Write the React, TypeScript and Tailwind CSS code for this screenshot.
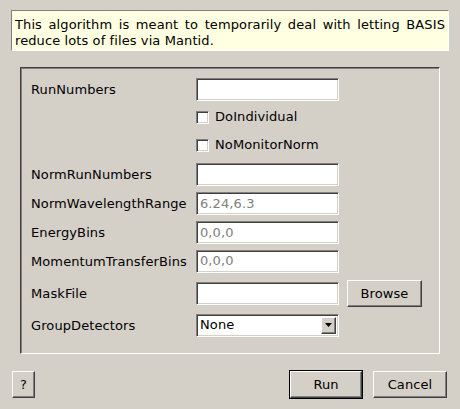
import React from 'react';

const sunken =
  'border border-t-[#808080] border-l-[#808080] border-r-white border-b-white shadow-[inset_1px_1px_0_#404040,inset_-1px_-1px_0_#d4d0c8]';
const raised =
  'border border-t-white border-l-white border-r-[#404040] border-b-[#404040] shadow-[inset_-1px_-1px_0_#808080] bg-[#d4d0c8]';

const TextField: React.FC<{ value?: string }> = ({ value }) => (
  <div className={`w-[143px] h-[23px] bg-white ${sunken} flex items-center pl-[3px] text-[#808080]`}>
    {value}
  </div>
);

const CheckBox: React.FC<{ label: string }> = ({ label }) => (
  <div className="flex items-center gap-[6px]">
    <div className={`w-[13px] h-[13px] bg-white ${sunken}`}></div>
    <span>{label}</span>
  </div>
);

export default function App() {
  return (
    <div
      className="w-[460px] h-[409px] bg-[#d4d0c8] text-[13px] leading-[16px] tracking-[0.1px] text-black flex flex-col"
      style={{ fontFamily: '"DejaVu Sans", Verdana, sans-serif' }}
    >
      {/* description */}
      <div className="pt-[10px] px-[11px]">
        <div className="h-[41px] bg-[#ffffe1] border border-t-[#808080] border-l-[#808080] border-r-white border-b-white pt-[6px] px-[3px] text-justify">
          This algorithm is meant to temporarily deal with letting BASIS reduce lots of files via Mantid.
        </div>
      </div>

      {/* properties group */}
      <div className="ml-[20px] mt-[16px] w-[420px] h-[287px] border border-t-[#404040] border-l-[#404040] border-r-white border-b-white shadow-[inset_1px_1px_0_#808080] pt-[7px] pl-[10px]">
        <div className="grid grid-cols-[165px_auto] items-center">
          <div className="h-[28px] flex items-center pt-[1px]">RunNumbers</div>
          <TextField />

          <div className="h-[28px]"></div>
          <CheckBox label="DoIndividual" />

          <div className="h-[28px]"></div>
          <CheckBox label="NoMonitorNorm" />

          <div className="h-[30px] flex items-center pt-[1px]">NormRunNumbers</div>
          <TextField />

          <div className="h-[29px] flex items-center pt-[1px]">NormWavelengthRange</div>
          <TextField value="6.24,6.3" />

          <div className="h-[29px] flex items-center pt-[1px]">EnergyBins</div>
          <TextField value="0,0,0" />

          <div className="h-[28px] flex items-center pt-[1px]">MomentumTransferBins</div>
          <TextField value="0,0,0" />

          <div className="h-[37px] flex items-center pt-[1px]">MaskFile</div>
          <div className="flex items-center gap-[8px]">
            <TextField />
            <button className={`w-[75px] h-[27px] ${raised} flex items-center justify-center`}>Browse</button>
          </div>

          <div className="h-[26px] flex items-center pt-[1px]">GroupDetectors</div>
          <div className={`w-[143px] h-[23px] bg-white ${sunken} flex items-center justify-between pl-[3px] pr-[2px]`}>
            <span>None</span>
            <div className={`w-[15px] h-[17px] ${raised} flex items-center justify-center`}>
              <svg width="7" height="4" viewBox="0 0 7 4">
                <path d="M0 0h7L3.5 4z" fill="#000" />
              </svg>
            </div>
          </div>
        </div>
      </div>

      {/* footer buttons */}
      <div className="mt-[16px] px-[12px] pr-[13px] h-[29px] flex items-center">
        <button className={`w-[23px] h-[27px] ${raised} flex items-center justify-center`}>?</button>
        <div className="flex-1"></div>
        <div className="border border-black">
          <button className={`w-[72px] h-[27px] ${raised} flex items-center justify-center`}>Run</button>
        </div>
        <button className={`ml-[10px] w-[74px] h-[27px] ${raised} flex items-center justify-center`}>Cancel</button>
      </div>
    </div>
  );
}
